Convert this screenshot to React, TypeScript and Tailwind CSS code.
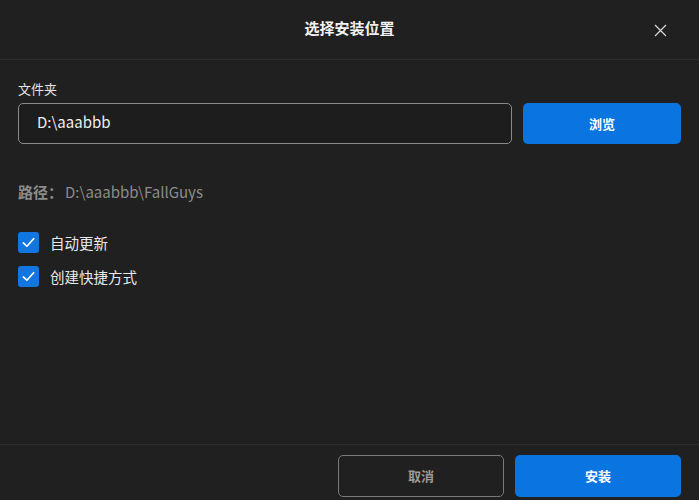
import React from "react";

function Check() {
  return (
    <span className="flex h-[21px] w-[21px] items-center justify-center rounded-[3px] bg-[#1276e0]">
      <svg width="15" height="15" viewBox="0 0 16 16" fill="none">
        <path d="M2.5 8.5 L6.3 12 L13.5 4" stroke="white" strokeWidth="1.8" strokeLinecap="round" strokeLinejoin="round" />
      </svg>
    </span>
  );
}

export default function App() {
  const font = { fontFamily: '"Noto Sans CJK SC", "Noto Sans", sans-serif' };
  return (
    <div className="flex h-[500px] w-[699px] flex-col bg-[#202020] text-white" style={font}>
      <div className="relative flex h-[60px] shrink-0 items-center justify-center border-b border-[#2c2c2c]">
        <span className="text-[15px] font-bold text-[#f2f2f2] -translate-y-[1px]">选择安装位置</span>
        <button className="absolute right-[32px] top-[23px] flex h-[14px] w-[14px] items-center justify-center">
          <svg width="13" height="13" viewBox="0 0 13 13">
            <path d="M1 1 L12 12 M12 1 L1 12" stroke="#d8d8d8" strokeWidth="1.2" />
          </svg>
        </button>
      </div>
      <div className="flex flex-1 flex-col px-[18px]">
        <div className="mt-[19px] text-[13px] leading-[20px] text-[#e6e6e6]">文件夹</div>
        <div className="mt-[4px] flex gap-[11px]">
          <div className="flex h-[41px] w-[494px] items-center rounded-[5px] border border-[#8a8a8a] bg-[#1d1d1d] pl-[18px] pb-[2px] text-[15px] text-[#eeeeee]">
            D:\aaabbb
          </div>
          <button className="flex h-[41px] w-[158px] items-center justify-center rounded-[5px] bg-[#0a74e0] text-[13px] font-bold text-white">
            浏览
          </button>
        </div>
        <div className="mt-[37px] flex items-center text-[15px] leading-[22px] text-[#8c8c8c]">
          <span className="font-bold">路径：</span>
          <span className="ml-[2px]">D:\aaabbb\FallGuys</span>
        </div>
        <div className="mt-[29px] flex flex-col gap-[13px]">
          <label className="flex items-center gap-[11px] text-[14.5px] leading-[21px] text-[#e8e8e8]">
            <Check />
            自动更新
          </label>
          <label className="flex items-center gap-[11px] text-[14.5px] leading-[21px] text-[#e8e8e8]">
            <Check />
            创建快捷方式
          </label>
        </div>
      </div>
      <div className="flex h-[56px] shrink-0 items-start justify-end gap-[11px] border-t border-[#2c2c2c] pr-[18px] pt-[10px]">
        <button className="flex h-[42px] w-[166px] items-center justify-center rounded-[5px] border border-[#7a7a7a] text-[13px] font-bold text-[#9a9a9a]">
          取消
        </button>
        <button className="flex h-[42px] w-[166px] items-center justify-center rounded-[5px] bg-[#0a74e0] text-[13px] font-bold text-white">
          安装
        </button>
      </div>
    </div>
  );
}
